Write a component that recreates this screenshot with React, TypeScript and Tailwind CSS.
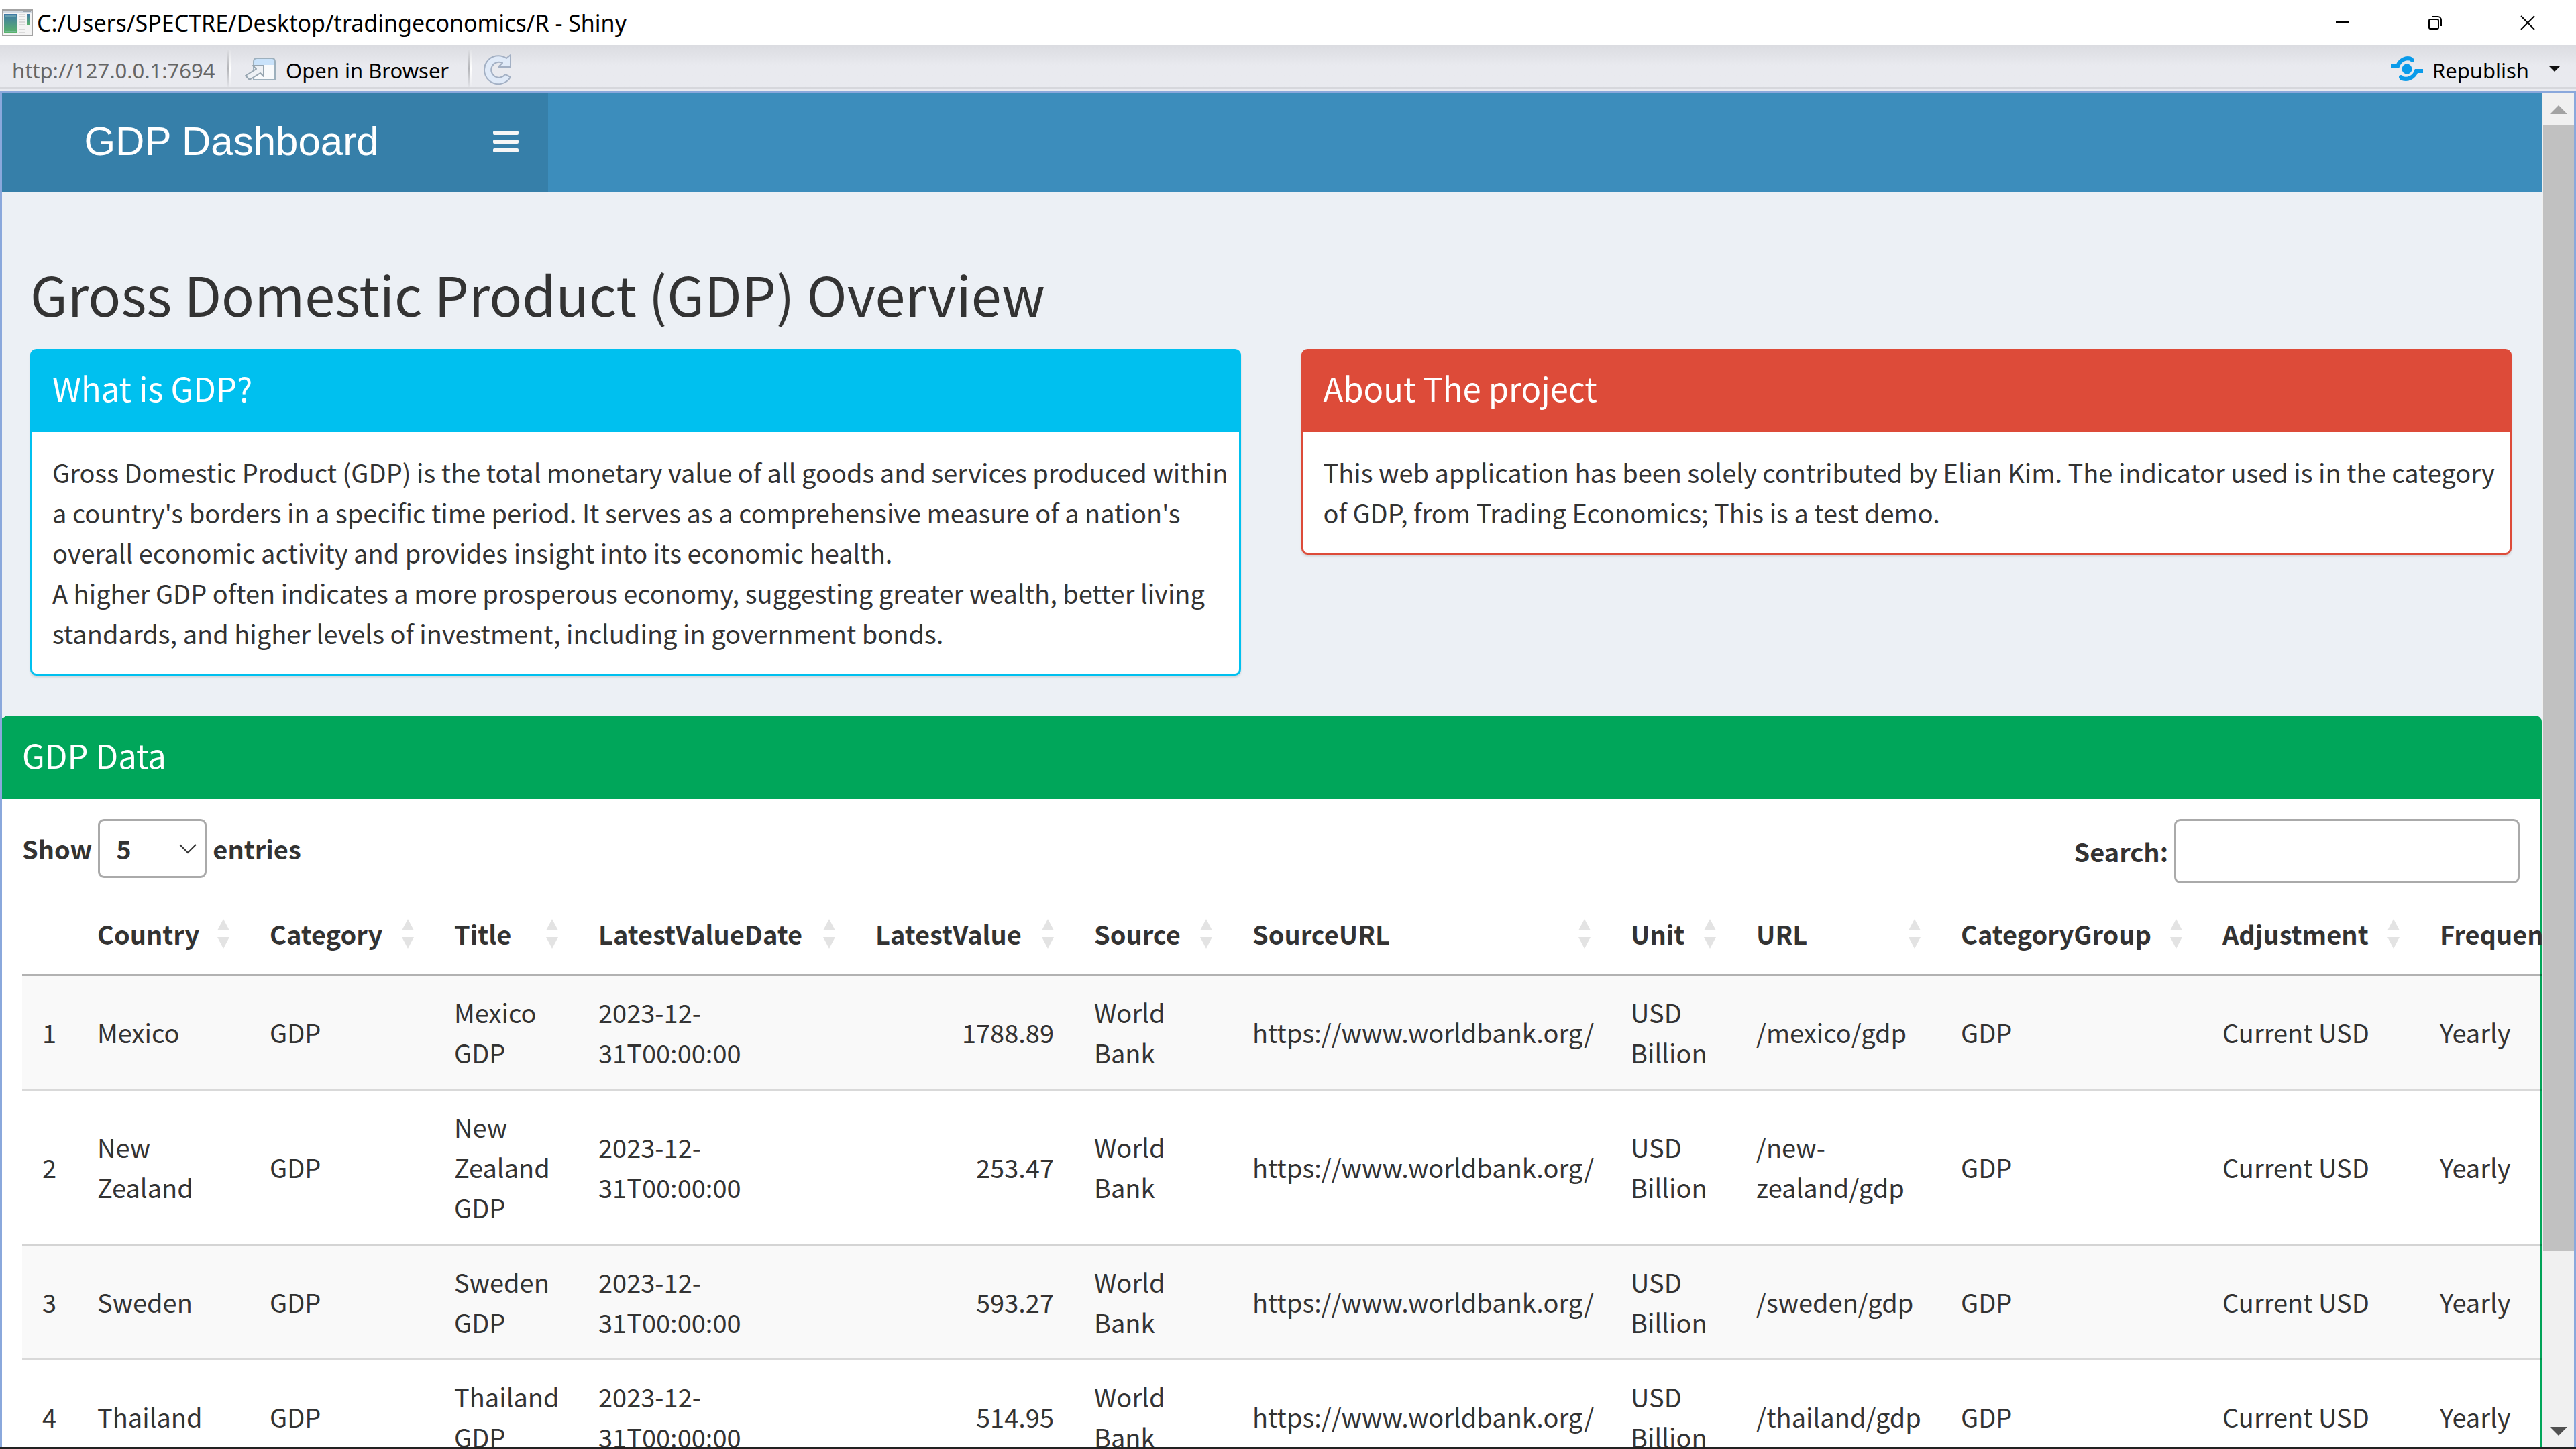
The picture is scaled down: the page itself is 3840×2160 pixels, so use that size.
import { Fragment, type ReactNode } from 'react';

const columns = [
  { name: 'Country', col: 'w-[257px]' },
  { name: 'Category', col: 'w-[275px]' },
  { name: 'Title', col: 'w-[215px]' },
  { name: 'LatestValueDate', col: 'w-[413px]' },
  { name: 'LatestValue', col: 'w-[326px]' },
  { name: 'Source', col: 'w-[236px]' },
  { name: 'SourceURL', col: 'w-[564px]' },
  { name: 'Unit', col: 'w-[187px]' },
  { name: 'URL', col: 'w-[305px]' },
  { name: 'CategoryGroup', col: 'w-[390px]' },
  { name: 'Adjustment', col: 'w-[324px]' },
  { name: 'Frequency', col: 'w-[330px]' },
];

const rows = [
  { country: 'Mexico', value: '1788.89', url: '/mexico/gdp' },
  { country: 'New Zealand', value: '253.47', url: '/new-zealand/gdp' },
  { country: 'Sweden', value: '593.27', url: '/sweden/gdp' },
  { country: 'Thailand', value: '514.95', url: '/thailand/gdp' },
];

function TitleBar() {
  return (
    <div className="flex h-[67px] shrink-0 items-center bg-white pr-[3px] text-black">
      <svg className="ml-[3px] h-[40px] w-[46px]" viewBox="0 0 46 40" preserveAspectRatio="none" aria-hidden="true">
        <defs>
          <linearGradient id="pane" x1="0" y1="0" x2="0" y2="1">
            <stop offset="0" stopColor="#3f78a6" />
            <stop offset="1" stopColor="#5bb56a" />
          </linearGradient>
        </defs>
        <rect x="1" y="1" width="44" height="38" fill="#f4f4f4" stroke="#a3a3a3" strokeWidth="2" />
        <rect x="2" y="2" width="42" height="3" fill="#d3dae2" />
        <path d="M31 3h12" stroke="#9aa3ad" strokeWidth="2" />
        <rect x="3" y="7" width="20" height="28" fill="url(#pane)" />
        <path d="M5 10h16M5 33h16" stroke="#8fc3c0" strokeWidth="1" />
        <path d="M26 8h8M26 11h8M26 15h8M26 19h8M26 23h8M26 30h8M26 34h8" stroke="#cfcfcf" strokeWidth="1.5" />
        <rect x="37" y="7" width="5" height="17" fill="url(#pane)" />
      </svg>
      <h1 className="ml-1.5 flex-1 text-[34px] leading-[48px]">C:/Users/SPECTRE/Desktop/tradingeconomics/R - Shiny</h1>
      <button aria-label="Minimize" className="flex h-full w-[138px] items-center justify-center">
        <svg className="size-[22px]" viewBox="0 0 22 22" fill="none" stroke="#000" strokeWidth="2"><path d="M1 10h20" /></svg>
      </button>
      <button aria-label="Restore" className="flex h-full w-[138px] items-center justify-center">
        <svg className="size-[22px]" viewBox="0 0 22 22" fill="none" stroke="#000" strokeWidth="2">
          <rect x="2" y="6" width="14" height="14" rx="2" />
          <path d="M6 2h9a5 5 0 0 1 5 5v9" />
        </svg>
      </button>
      <button aria-label="Close" className="flex h-full w-[138px] items-center justify-center">
        <svg className="size-[22px]" viewBox="0 0 22 22" fill="none" stroke="#000" strokeWidth="1.8"><path d="M1 1l20 20M21 1L1 21" /></svg>
      </button>
    </div>
  );
}

function Separator() {
  return (
    <div className="flex h-full shrink-0">
      <div className="w-[3px] bg-linear-to-b from-[#dcdde1] via-[#b4b5b9] to-[#e4e5ea]" />
      <div className="w-[3px] bg-linear-to-b from-[#e2e3e7] via-white to-[#e9eaef]" />
    </div>
  );
}

function Toolbar() {
  return (
    <div className="flex h-[69px] shrink-0 flex-col bg-[#e9eaef]">
      <div className="flex flex-1 items-center border-b-3 border-[#d6d7dc] bg-linear-to-b from-[#dbdce1] to-[#e9eaef] to-50% pt-2 text-[31px] leading-[44px] text-black">
        <span className="w-[339px] shrink-0 pt-1 pl-[18px] text-[#666]">http://127.0.0.1:7694</span>
        <Separator />
        <button className="flex w-[352px] items-center gap-[15px] pl-[20px]">
          <svg className="h-[34px] w-[46px]" viewBox="0 0 46 34" aria-hidden="true">
            <rect x="13" y="1" width="32" height="32" rx="5" fill="#f8fafc" />
            <path d="M13 11V6q0-5 5-5h22q5 0 5 5v5z" fill="#c9e2fa" />
            <path d="M45 33H13V6q0-5 5-5h22q5 0 5 5z" fill="none" stroke="#9db0bd" strokeWidth="2" />
            <path d="M12 12h16v16l-5-5-16 10-6-6 16-10z" fill="#eef1f5" stroke="#97a5b0" strokeWidth="2" strokeLinejoin="round" />
          </svg>
          <span className="pt-1 whitespace-nowrap">Open in Browser</span>
        </button>
        <Separator />
        <button aria-label="Refresh" className="ml-[16px]">
          <svg className="h-[46px] w-[44px]" viewBox="0 0 44 46" aria-hidden="true">
            <path d="M42 2V20H24L30 14A11.500 11.500 0 1 0 34 31L42 35A21 21 0 1 1 36 7Z" fill="#e0eaf8" stroke="#a3b0c4" strokeWidth="2" strokeLinejoin="round" />
          </svg>
        </button>
        <button className="ml-auto flex items-center gap-[14px]">
          <svg className="h-[38px] w-[48px]" viewBox="0 0 48 38" fill="none" stroke="#0a9bea" strokeWidth="6" aria-hidden="true">
            <path d="M0 15h10C13 6 23 0 32 5" />
            <circle cx="32" cy="6" r="3" fill="#0a9bea" stroke="none" />
            <path d="M48 22H38C35 31 25 37 15 32" />
            <circle cx="15" cy="31" r="3" fill="#0a9bea" stroke="none" />
            <circle cx="24" cy="19" r="7.5" fill="#0a9bea" stroke="none" />
          </svg>
          <span className="pt-1">Republish</span>
        </button>
        <button aria-label="Publish options" className="mr-[24px] ml-[30px]">
          <svg className="h-[8px] w-[16px]" viewBox="0 0 16 8"><path d="M0 0h16L8 8z" fill="#111" /></svg>
        </button>
      </div>
      <div className="h-[3px]" />
    </div>
  );
}

function Box({ title, frame, head, children }: { title: string; frame: string; head: string; children: ReactNode }) {
  return (
    <section className={`rounded-[9px] border-3 bg-white shadow-[0_3px_3px_rgba(0,0,0,0.1)] ${frame}`}>
      <h3 className={`flex h-[121px] items-center px-[30px] pb-3 text-[49px] leading-[60px] text-white ${head}`}>{title}</h3>
      <div className="p-[30px]">{children}</div>
    </section>
  );
}

function SortIcon() {
  return (
    <svg className="h-[44px] w-[18px] shrink-0" viewBox="0 0 18 44" fill="#e3e3e3" aria-hidden="true">
      <path d="M9 0l9 17H0zM0 27h18L9 44z" />
    </svg>
  );
}

function DataTable() {
  return (
    <table className="mt-[15px] w-full table-fixed border-separate border-spacing-0">
      <colgroup>
        <col className="w-[82px]" />
        {columns.map((c) => (
          <col key={c.name} className={c.col} />
        ))}
      </colgroup>
      <thead>
        <tr>
          <th className="border-b-3 border-black/30" />
          {columns.map((c) => (
            <th key={c.name} className="border-b-3 border-black/30 p-[30px] font-bold">
              <button className="flex w-full items-center justify-between">
                {c.name}
                <SortIcon />
              </button>
            </th>
          ))}
        </tr>
      </thead>
      <tbody>
        {rows.map((r, i) => {
          const cells = [
            String(i + 1), r.country, 'GDP', `${r.country} GDP`, '2023-12-31T00:00:00', r.value, 'World Bank',
            'https://www.worldbank.org/', 'USD Billion', r.url, 'GDP', 'Current USD', 'Yearly',
          ];
          return (
            <tr key={r.country} className="group odd:bg-black/[0.024]">
              {cells.map((text, j) => (
                <td
                  key={j}
                  className={`border-black/15 px-[30px] py-[24px] align-middle group-[:not(:first-child)]:border-t-3 ${j === 5 ? 'text-right' : ''} ${j === 7 || j === 11 ? 'whitespace-nowrap' : ''}`}
                >
                  {text.split(/(?<=-)/).map((part, k) => (
                    <Fragment key={k}>
                      {k > 0 && <wbr />}
                      {part}
                    </Fragment>
                  ))}
                </td>
              ))}
            </tr>
          );
        })}
      </tbody>
    </table>
  );
}

function ScrollBar() {
  return (
    <div className="flex w-12 shrink-0 flex-col bg-[#f0f0f0]">
      <button aria-label="Scroll up" className="flex h-12 items-center justify-center pl-0.5">
        <svg className="h-[13px] w-[26px]" viewBox="0 0 26 13"><path d="M13 0l13 13H0z" fill="#a3a3a3" /></svg>
      </button>
      <div className="flex flex-1 flex-col pl-0.5">
        <div className="basis-[87.3%] bg-[#c1c1c1]" />
      </div>
      <button aria-label="Scroll down" className="flex h-12 items-center justify-center pl-0.5">
        <svg className="h-[13px] w-[26px]" viewBox="0 0 26 13"><path d="M0 0h26L13 13z" fill="#505050" /></svg>
      </button>
    </div>
  );
}

export default function App() {
  return (
    <div className="flex h-screen flex-col overflow-hidden border-b-3 border-[#222] font-['Noto_Sans',sans-serif]">
      <TitleBar />
      <Toolbar />
      <div className="flex min-h-0 flex-1 border-x-3 border-t-3 border-[#8aa8dc]">
        <main className="min-w-0 flex-1 overflow-hidden bg-[#ecf0f5] font-['Noto_Sans_CJK_SC',sans-serif] text-[38px] leading-[60px] text-[#333]">
          <header className="flex h-[147px] bg-[#3c8dbc]">
            <div className="flex w-[814px] items-center bg-[#367fa9] pb-1 text-white">
              <span className="w-[684px] text-center font-['Liberation_Sans',sans-serif] text-[60px]">GDP Dashboard</span>
              <button aria-label="Toggle navigation" className="ml-12">
                <svg className="h-[34px] w-[38px]" viewBox="0 0 38 34" fill="#f6f6f6">
                  <rect width="38" height="6" y="1" rx="2" /><rect width="38" height="6" y="14" rx="2" /><rect width="38" height="6" y="27" rx="2" />
                </svg>
              </button>
            </div>
          </header>
          <div className="pt-[101px] pr-[45px] pl-[42px]">
            <h2 className="mb-[34px] text-[81px] leading-[99px]">Gross Domestic Product (GDP) Overview</h2>
            <div className="grid grid-cols-2 items-start gap-[90px] pb-[60px]">
              <Box title="What is GDP?" frame="border-[#00c0ef]" head="bg-[#00c0ef]">
                <div className="-mr-4">
                  <p>
                    Gross Domestic Product (GDP) is the total monetary value of all goods and services produced within a
                    country's borders in a specific time period. It serves as a comprehensive measure of a nation's
                    overall economic activity and provides insight into its economic health.
                  </p>
                  <p>
                    A higher GDP often indicates a more prosperous economy, suggesting greater wealth, better living
                    standards, and higher levels of investment, including in government bonds.
                  </p>
                </div>
              </Box>
              <Box title="About The project" frame="border-[#dd4b39]" head="bg-[#dd4b39]">
                <p className="-mr-4">
                  This web application has been solely contributed by Elian Kim. The indicator used is in the category
                  of GDP, from Trading Economics; This is a test demo.
                </p>
              </Box>
            </div>
          </div>
          <Box title="GDP Data" frame="border-[#00a65a] border-l-0" head="bg-[#00a65a]">
            <div className="flex items-start justify-between font-bold">
              <label className="flex items-center gap-[9px]">
                Show
                <span className="relative flex items-center">
                  <select className="h-[88px] w-[162px] appearance-none rounded-[9px] border-3 border-[#aaa] bg-white pl-[24px] font-bold">
                    <option>5</option>
                  </select>
                  <svg className="pointer-events-none absolute right-[15px] h-[15px] w-[26px]" viewBox="0 0 26 15" fill="none" stroke="#333" strokeWidth="2" aria-hidden="true">
                    <path d="M1 1l12 12L25 1" />
                  </svg>
                </span>
                entries
              </label>
              <label className="flex items-center gap-[9px]">
                Search:
                <input type="search" className="h-[96px] w-[515px] rounded-[9px] border-3 border-[#aaa] bg-white px-[15px]" />
              </label>
            </div>
            <DataTable />
          </Box>
        </main>
        <ScrollBar />
      </div>
    </div>
  );
}
